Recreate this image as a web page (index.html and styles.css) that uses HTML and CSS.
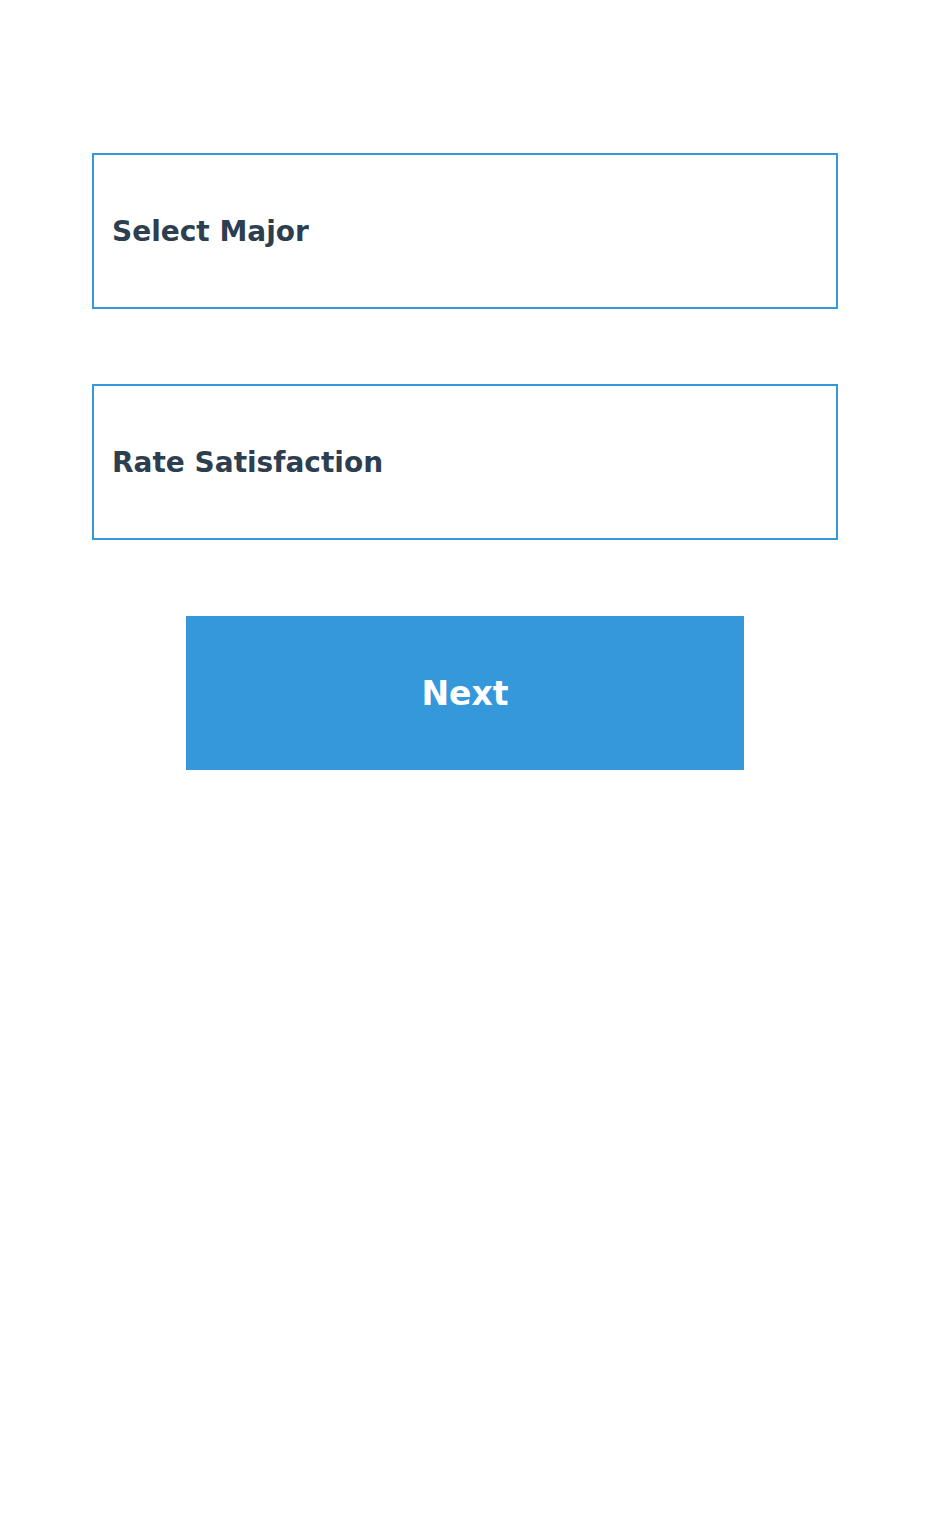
FILE: index.html
```html
<!DOCTYPE html>
<html>
<head>
<meta charset="utf-8">
<link rel="stylesheet" href="styles.css">
</head>
<body>
<main class="form">
  <div class="field">Select Major</div>
  <div class="field field-second">Rate Satisfaction</div>
  <button class="next">Next</button>
</main>
</body>
</html>
```
FILE: styles.css
```css
html, body {
  margin: 0;
  padding: 0;
  background: #ffffff;
}
body {
  font-family: "DejaVu Sans", sans-serif;
}
.form {
  display: flex;
  flex-direction: column;
  align-items: center;
  padding-top: 153px;
}
.field {
  box-sizing: border-box;
  width: 746px;
  height: 156px;
  border: 2px solid #3498db;
  padding: 0 18px;
  display: flex;
  align-items: center;
  font-size: 28px;
  font-weight: bold;
  color: #2c3e50;
}
.field-second {
  margin-top: 75px;
}
.next {
  box-sizing: border-box;
  width: 558px;
  height: 154px;
  margin-top: 76px;
  border: none;
  background: #3498db;
  color: #ffffff;
  font-family: "DejaVu Sans", sans-serif;
  font-size: 33px;
  font-weight: bold;
  padding: 0;
}
```
